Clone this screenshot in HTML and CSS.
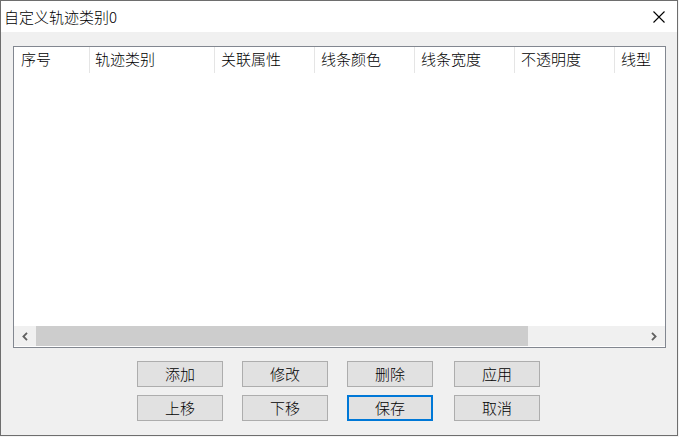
FILE: index.html
```html
<!DOCTYPE html>
<html lang="zh-CN">
<head>
<meta charset="utf-8">
<title>自定义轨迹类别0</title>
<link rel="stylesheet" href="styles.css">
</head>
<body>
<div class="window">
  <div class="titlebar">
    <span class="title">自定义轨迹类别0</span>
    <span class="close"><svg width="12" height="12" viewBox="0 0 12 12"><path d="M0.5 0.5 L11.5 11.5 M11.5 0.5 L0.5 11.5" stroke="#000" stroke-width="1.1"/></svg></span>
  </div>
  <div class="content">
    <div class="list">
      <div class="header">
        <div class="col c1">序号</div>
        <div class="col c2">轨迹类别</div>
        <div class="col">关联属性</div>
        <div class="col">线条颜色</div>
        <div class="col">线条宽度</div>
        <div class="col">不透明度</div>
        <div class="col">线型</div>
      </div>
      <div class="rows"></div>
      <div class="hscroll">
        <div class="arrow"><svg width="6" height="9" viewBox="0 0 6 9"><path d="M5 0.8 L1.4 4.5 L5 8.2" fill="none" stroke="#606060" stroke-width="1.8"/></svg></div>
        <div class="track"><div class="thumb"></div></div>
        <div class="arrow"><svg width="6" height="9" viewBox="0 0 6 9"><path d="M1 0.8 L4.6 4.5 L1 8.2" fill="none" stroke="#606060" stroke-width="1.8"/></svg></div>
      </div>
    </div>
    <div class="buttons">
      <div class="btn-row">
        <div class="btn">添加</div>
        <div class="btn">修改</div>
        <div class="btn">删除</div>
        <div class="btn">应用</div>
      </div>
      <div class="btn-row">
        <div class="btn">上移</div>
        <div class="btn">下移</div>
        <div class="btn btn-default">保存</div>
        <div class="btn">取消</div>
      </div>
    </div>
  </div>
</div>
</body>
</html>
```
FILE: styles.css
```css
* { box-sizing: border-box; }
html, body { margin: 0; padding: 0; }
body {
  background: #f4f4f4;
  width: 679px;
  height: 437px;
  overflow: hidden;
  font-family: "Noto Sans CJK SC", "Microsoft YaHei", sans-serif;
  font-weight: 300;
  color: #000;
}
.window {
  width: 678px;
  height: 436px;
  border: 1px solid #6e6e6e;
  background: #f0f0f0;
  display: flex;
  flex-direction: column;
}
.titlebar {
  height: 31px;
  flex: none;
  background: #fff;
  display: flex;
  align-items: center;
  justify-content: space-between;
  padding: 0 12px 0 3px;
}
.title {
  font-size: 15px;
  line-height: 31px;
  white-space: nowrap;
}
.close { display: flex; align-items: center; }
.close svg { display: block; }
.content {
  flex: 1;
  display: flex;
  flex-direction: column;
  padding: 14px 11px 14px 12px;
}
.list {
  height: 302px;
  flex: none;
  border: 1px solid #828790;
  background: #fff;
  display: flex;
  flex-direction: column;
  overflow: hidden;
  padding-bottom: 1px;
}
.header {
  height: 26px;
  flex: none;
  display: flex;
  overflow: hidden;
}
.col {
  flex: none;
  width: 100px;
  border-right: 1px solid #e5e5e5;
  font-size: 15px;
  line-height: 24px;
  padding-left: 6px;
  white-space: nowrap;
}
.col.c1 { width: 76px; padding-left: 7px; }
.col.c2 { width: 125px; padding-left: 5px; }
.rows { flex: 1; }
.hscroll {
  height: 20px;
  flex: none;
  display: flex;
  background: #f0f0f0;
}
.arrow {
  width: 22px;
  flex: none;
  display: flex;
  align-items: center;
  justify-content: center;
}
.arrow svg { display: block; }
.track { flex: 1; display: flex; align-items: stretch; }
.thumb { width: 492px; background: #cdcdcd; }
.buttons {
  margin: 13px 1px 0 -1px;
  display: flex;
  flex-direction: column;
  gap: 8px;
}
.btn-row {
  display: flex;
  justify-content: center;
  gap: 19px;
}
.btn {
  width: 86px;
  height: 26px;
  border: 1px solid #adadad;
  background: #e1e1e1;
  font-size: 15px;
  line-height: 24px;
  text-align: center;
}
.btn:nth-child(4) { margin-left: 2px; }
.btn-default {
  border: 2px solid #0078d7;
  line-height: 22px;
}
```
